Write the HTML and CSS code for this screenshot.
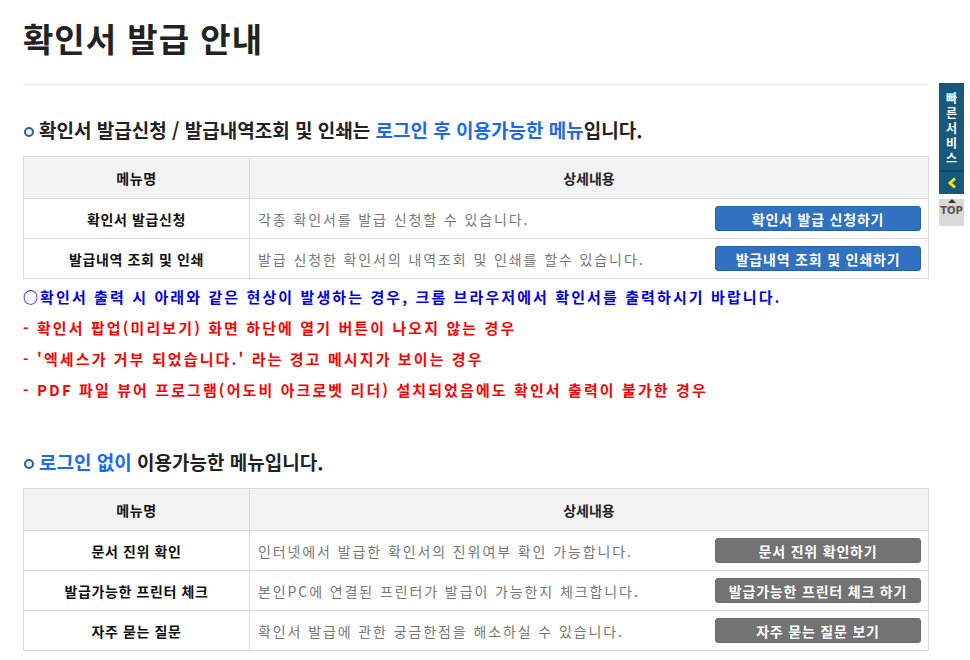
FILE: index.html
```html
<!DOCTYPE html>
<html lang="ko">
<head>
    <meta charset="UTF-8">
    <meta name="viewport" content="width=device-width, initial-scale=1.0">
    <title>확인서 발급 안내</title>
    <link rel="stylesheet" href="styles.css">
</head>
<body>

    <div class="page">
        <h1 class="page-title">확인서 발급 안내</h1>
        <hr class="title-line">

        <h2 class="sub-title"><span class="dot"></span>확인서 발급신청 / 발급내역조회 및 인쇄는 <em>로그인 후 이용가능한 메뉴</em>입니다.</h2>

        <table class="menu-table">
            <tr>
                <th class="col-name">메뉴명</th>
                <th>상세내용</th>
            </tr>
            <tr>
                <td class="col-name">확인서 발급신청</td>
                <td>
                    <div class="desc">
                        <span>각종 확인서를 발급 신청할 수 있습니다.</span>
                        <button class="btn btn-blue">확인서 발급 신청하기</button>
                    </div>
                </td>
            </tr>
            <tr>
                <td class="col-name">발급내역 조회 및 인쇄</td>
                <td>
                    <div class="desc">
                        <span>발급 신청한 확인서의 내역조회 및 인쇄를 할수 있습니다.</span>
                        <button class="btn btn-blue">발급내역 조회 및 인쇄하기</button>
                    </div>
                </td>
            </tr>
        </table>

        <div class="notice">
            <p class="notice-blue">○확인서 출력 시 아래와 같은 현상이 발생하는 경우, 크롬 브라우저에서 확인서를 출력하시기 바랍니다.</p>
            <p class="notice-red">- 확인서 팝업(미리보기) 화면 하단에 열기 버튼이 나오지 않는 경우</p>
            <p class="notice-red">- '엑세스가 거부 되었습니다.' 라는 경고 메시지가 보이는 경우</p>
            <p class="notice-red">- PDF 파일 뷰어 프로그램(어도비 아크로벳 리더) 설치되었음에도 확인서 출력이 불가한 경우</p>
        </div>

        <h2 class="sub-title second"><span class="dot"></span><em>로그인 없이</em> 이용가능한 메뉴입니다.</h2>

        <table class="menu-table">
            <tr>
                <th class="col-name">메뉴명</th>
                <th>상세내용</th>
            </tr>
            <tr>
                <td class="col-name">문서 진위 확인</td>
                <td>
                    <div class="desc">
                        <span>인터넷에서 발급한 확인서의 진위여부 확인 가능합니다.</span>
                        <button class="btn btn-gray">문서 진위 확인하기</button>
                    </div>
                </td>
            </tr>
            <tr>
                <td class="col-name">발급가능한 프린터 체크</td>
                <td>
                    <div class="desc">
                        <span>본인PC에 연결된 프린터가 발급이 가능한지 체크합니다.</span>
                        <button class="btn btn-gray">발급가능한 프린터 체크 하기</button>
                    </div>
                </td>
            </tr>
            <tr>
                <td class="col-name">자주 묻는 질문</td>
                <td>
                    <div class="desc">
                        <span>확인서 발급에 관한 궁금한점을 해소하실 수 있습니다.</span>
                        <button class="btn btn-gray">자주 묻는 질문 보기</button>
                    </div>
                </td>
            </tr>
        </table>
    </div>

    <!-- quick menu -->
    <div class="quick">
        <div class="quick-title"><span>빠른서비스</span></div>
        <div class="quick-open">
            <svg width="10" height="12" viewBox="0 0 10 12"><path d="M8 1.5 L3 6 L8 10.5" fill="none" stroke="#f2e600" stroke-width="3"/></svg>
        </div>
        <div class="quick-top"><span class="arrow"></span>TOP</div>
    </div>

</body>
</html>
```

FILE: styles.css
```css
body {
    margin: 0;
    padding: 0;
    background-color: #fff;
    font-family: "Noto Sans CJK KR", "Liberation Sans", sans-serif;
    color: #222;
}

.page {
    width: 906px;
    padding: 17px 0 0 23px;
}

.page-title {
    margin: 0;
    font-size: 33px;
    line-height: 42px;
    font-weight: bold;
    letter-spacing: 1px;
    color: #222;
}

.title-line {
    margin: 25px 0 0;
    border: none;
    border-top: 1px solid #e6e6e6;
}

.sub-title {
    margin: 32px 0 0;
    font-size: 19px;
    line-height: 26px;
    font-weight: bold;
    color: #222;
}

.sub-title em {
    font-style: normal;
    color: #1a6af0;
}

.sub-title.second {
    margin-top: 44px;
}

.dot {
    display: inline-block;
    width: 6px;
    height: 6px;
    margin: 0 5px 0 1px;
    border: 2px solid #2d5f93;
    border-radius: 50%;
    background-color: #e8f0f8;
    vertical-align: 1px;
}

.menu-table {
    width: 100%;
    margin-top: 13px;
    border-collapse: collapse;
    border: 1px solid #dcdcdc;
    font-size: 14px;
}

.menu-table th,
.menu-table td {
    border: 1px solid #dcdcdc;
    padding: 0;
}

.menu-table th {
    height: 41px;
    background-color: #f3f3f3;
    font-weight: bold;
    color: #222;
}

.menu-table td {
    height: 39px;
}

.menu-table .col-name {
    width: 225px;
    text-align: center;
    font-weight: bold;
    letter-spacing: 0.6px;
    color: #111;
}

.desc {
    display: flex;
    align-items: center;
    justify-content: space-between;
    padding: 0 7px 0 8px;
    color: #777;
    letter-spacing: 1.9px;
}

.btn {
    width: 206px;
    height: 25px;
    padding: 0;
    border-radius: 3px;
    font-family: inherit;
    font-size: 14px;
    font-weight: bold;
    letter-spacing: 0.8px;
    color: #fff;
    cursor: pointer;
}

.btn-blue {
    background-color: #3071c1;
    border: 1px solid #2861a8;
}

.btn-gray {
    background-color: #737373;
    border: 1px solid #6a6a6a;
}

.notice {
    margin-top: 2px;
    font-size: 15px;
    font-weight: bold;
    letter-spacing: 2.1px;
}

.notice p {
    margin: 0;
    line-height: 31px;
}

.notice-blue {
    color: #0000f0;
}

.notice-red {
    color: #ff0000;
}

/* quick menu */
.quick {
    position: absolute;
    left: 939px;
    top: 83px;
    width: 25px;
}

.quick-title {
    display: flex;
    justify-content: center;
    height: 89px;
    padding-top: 9px;
    box-sizing: border-box;
    background-color: #17587c;
    border-bottom: 2px solid #0f4866;
}

.quick-title span {
    writing-mode: vertical-rl;
    text-orientation: upright;
    font-size: 12px;
    line-height: 25px;
    letter-spacing: 3px;
    font-weight: bold;
    color: #fff;
}

.quick-open {
    display: flex;
    align-items: center;
    justify-content: center;
    height: 22px;
    background-color: #17587c;
}

.quick-top {
    height: 27px;
    background-color: #d9d9d9;
    text-align: center;
    font-size: 10px;
    line-height: 11px;
    font-weight: bold;
    color: #555;
    font-family: "DejaVu Sans", sans-serif;
}

.quick-top .arrow {
    display: block;
    width: 0;
    height: 0;
    margin: 5px auto 2px;
    border-left: 4px solid transparent;
    border-right: 4px solid transparent;
    border-bottom: 4px solid #333;
}
```
